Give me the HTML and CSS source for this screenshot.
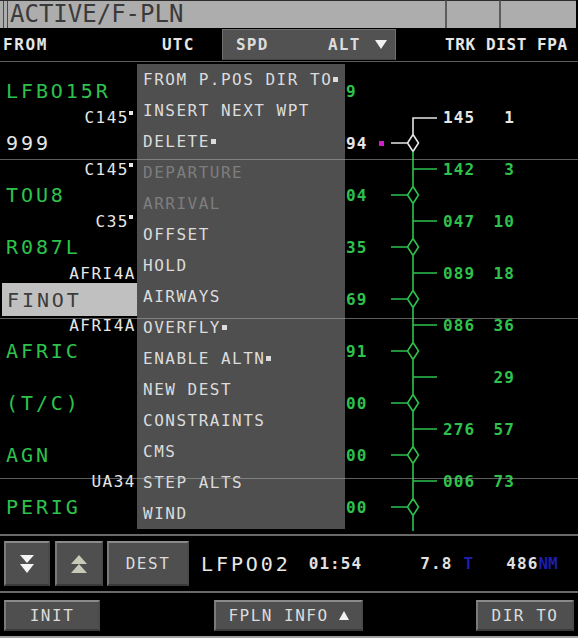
FILE: index.html
```html
<!DOCTYPE html>
<html>
<head>
<meta charset="utf-8">
<link rel="stylesheet" href="styles.css">
</head>
<body>
<div class="screen">
  <div class="title">
    <div class="title-main"><div class="edge"></div><span class="title-text">ACTIVE/F-PLN</span></div>
    <div class="title-cell c1"></div>
    <div class="title-cell c2"></div>
  </div>
  <div class="header">
    <span class="h-from">FROM</span>
    <span class="h-utc">UTC</span>
    <div class="h-box"><span class="h-spd">SPD</span><span class="h-alt">ALT</span><span class="h-tri"></span></div>
    <span class="h-right">TRK DIST FPA</span>
  </div>
  <div class="sep-top"></div>
  <div class="list">
    <div class="gap-top"></div>

    <div class="row">
      <div class="name green">LFBO15R</div>
      <div class="val green">9</div>
      <div class="mark"></div>
      <div class="trk"></div>
      <div class="data"></div>
    </div>

    <div class="row">
      <div class="lbl">C145<i class="deg"></i></div>
      <div class="val"></div>
      <div class="mark"></div>
      <svg class="trk" width="47" height="26" viewBox="0 0 47 26"><path class="w" d="M23 26V14H47"/></svg>
      <div class="data white"><span class="t">145</span><span class="d">1</span></div>
    </div>

    <div class="row">
      <div class="name white">999</div>
      <div class="val white">94</div>
      <div class="mark"><i class="mg"></i></div>
      <svg class="trk" width="47" height="26" viewBox="0 0 47 26"><path class="w" d="M23 0V4.5M1 13H17.5M23 4.5L28.5 13L23 21.5L17.5 13Z"/><path class="g" d="M23 21.5V26"/></svg>
      <div class="data"></div>
    </div>

    <div class="row">
      <div class="lbl">C145<i class="deg"></i></div>
      <div class="val"></div>
      <div class="mark"></div>
      <svg class="trk" width="47" height="26" viewBox="0 0 47 26"><path class="g" d="M23 0V26M23 13H47"/></svg>
      <div class="data green"><span class="t">142</span><span class="d">3</span></div>
    </div>

    <div class="row">
      <div class="name green">TOU8</div>
      <div class="val green">04</div>
      <div class="mark"></div>
      <svg class="trk" width="47" height="26" viewBox="0 0 47 26"><path class="g" d="M23 0V4.5M23 21.5V26M1 13H17.5M23 4.5L28.5 13L23 21.5L17.5 13Z"/></svg>
      <div class="data"></div>
    </div>

    <div class="row">
      <div class="lbl">C35<i class="deg"></i></div>
      <div class="val"></div>
      <div class="mark"></div>
      <svg class="trk" width="47" height="26" viewBox="0 0 47 26"><path class="g" d="M23 0V26M23 13H47"/></svg>
      <div class="data green"><span class="t">047</span><span class="d">10</span></div>
    </div>

    <div class="row">
      <div class="name green">R087L</div>
      <div class="val green">35</div>
      <div class="mark"></div>
      <svg class="trk" width="47" height="26" viewBox="0 0 47 26"><path class="g" d="M23 0V4.5M23 21.5V26M1 13H17.5M23 4.5L28.5 13L23 21.5L17.5 13Z"/></svg>
      <div class="data"></div>
    </div>

    <div class="row">
      <div class="lbl">AFRI4A</div>
      <div class="val"></div>
      <div class="mark"></div>
      <svg class="trk" width="47" height="26" viewBox="0 0 47 26"><path class="g" d="M23 0V26M23 13H47"/></svg>
      <div class="data green"><span class="t">089</span><span class="d">18</span></div>
    </div>

    <div class="row">
      <div class="name sel">FINOT</div>
      <div class="val green">69</div>
      <div class="mark"></div>
      <svg class="trk" width="47" height="26" viewBox="0 0 47 26"><path class="g" d="M23 0V4.5M23 21.5V26M1 13H17.5M23 4.5L28.5 13L23 21.5L17.5 13Z"/></svg>
      <div class="data"></div>
    </div>

    <div class="row">
      <div class="lbl">AFRI4A</div>
      <div class="val"></div>
      <div class="mark"></div>
      <svg class="trk" width="47" height="26" viewBox="0 0 47 26"><path class="g" d="M23 0V26M23 13H47"/></svg>
      <div class="data green"><span class="t">086</span><span class="d">36</span></div>
    </div>

    <div class="row">
      <div class="name green">AFRIC</div>
      <div class="val green">91</div>
      <div class="mark"></div>
      <svg class="trk" width="47" height="26" viewBox="0 0 47 26"><path class="g" d="M23 0V4.5M23 21.5V26M1 13H17.5M23 4.5L28.5 13L23 21.5L17.5 13Z"/></svg>
      <div class="data"></div>
    </div>

    <div class="row">
      <div class="lbl"></div>
      <div class="val"></div>
      <div class="mark"></div>
      <svg class="trk" width="47" height="26" viewBox="0 0 47 26"><path class="g" d="M23 0V26M23 13H47"/></svg>
      <div class="data green"><span class="t"></span><span class="d">29</span></div>
    </div>

    <div class="row">
      <div class="name green">(T/C)</div>
      <div class="val green">00</div>
      <div class="mark"></div>
      <svg class="trk" width="47" height="26" viewBox="0 0 47 26"><path class="g" d="M23 0V4.5M23 21.5V26M1 13H17.5M23 4.5L28.5 13L23 21.5L17.5 13Z"/></svg>
      <div class="data"></div>
    </div>

    <div class="row">
      <div class="lbl"></div>
      <div class="val"></div>
      <div class="mark"></div>
      <svg class="trk" width="47" height="26" viewBox="0 0 47 26"><path class="g" d="M23 0V26M23 13H47"/></svg>
      <div class="data green"><span class="t">276</span><span class="d">57</span></div>
    </div>

    <div class="row">
      <div class="name green">AGN</div>
      <div class="val green">00</div>
      <div class="mark"></div>
      <svg class="trk" width="47" height="26" viewBox="0 0 47 26"><path class="g" d="M23 0V4.5M23 21.5V26M1 13H17.5M23 4.5L28.5 13L23 21.5L17.5 13Z"/></svg>
      <div class="data"></div>
    </div>

    <div class="row">
      <div class="lbl">UA34</div>
      <div class="val"></div>
      <div class="mark"></div>
      <svg class="trk" width="47" height="26" viewBox="0 0 47 26"><path class="g" d="M23 0V26M23 13H47"/></svg>
      <div class="data green"><span class="t">006</span><span class="d">73</span></div>
    </div>

    <div class="row">
      <div class="name green">PERIG</div>
      <div class="val green">00</div>
      <div class="mark"></div>
      <svg class="trk" width="47" height="26" viewBox="0 0 47 26"><path class="g" d="M23 0V4.5M23 21.5V26M1 13H17.5M23 4.5L28.5 13L23 21.5L17.5 13Z"/></svg>
      <div class="data"></div>
    </div>

    <div class="tail">
      <div></div><div></div><div></div>
      <svg class="trk" width="47" height="14" viewBox="0 0 47 14"><path class="g" d="M23 0V11"/></svg>
    </div>

    <div class="menu">
      <div class="item">FROM P.POS DIR TO<i class="sq"></i></div>
      <div class="item">INSERT NEXT WPT</div>
      <div class="item">DELETE<i class="sq"></i></div>
      <div class="item off">DEPARTURE</div>
      <div class="item off">ARRIVAL</div>
      <div class="item">OFFSET</div>
      <div class="item">HOLD</div>
      <div class="item">AIRWAYS</div>
      <div class="item">OVERFLY<i class="sq"></i></div>
      <div class="item">ENABLE ALTN<i class="sq"></i></div>
      <div class="item">NEW DEST</div>
      <div class="item">CONSTRAINTS</div>
      <div class="item">CMS</div>
      <div class="item">STEP ALTS</div>
      <div class="item">WIND</div>
    </div>

    <div class="scan s1"></div>
    <div class="scan s2"></div>
    <div class="scan s3"></div>
  </div>
  <div class="sep-mid"></div>
  <div class="foot1">
    <div class="btn b-down"><svg width="16" height="20" viewBox="0 0 16 20"><path d="M1 1H15L8 9Z M1 10H15L8 19Z" fill="#f4f4f4"/></svg></div>
    <div class="btn b-up"><svg width="18" height="20" viewBox="0 0 18 20"><path d="M9 1L17 10H1Z M9 10L17 19H1Z" fill="#c9c9b9"/></svg></div>
    <div class="btn b-dest">DEST</div>
    <span class="dest-name">LFPO02</span>
    <span class="dest-time">01:54</span>
    <span class="dest-efob">7.8</span>
    <span class="unit u-t">T</span>
    <span class="dest-dist">486</span>
    <span class="unit">NM</span>
  </div>
  <div class="sep-mid"></div>
  <div class="foot2">
    <div class="btn b-init">INIT</div>
    <div class="btn b-info">FPLN INFO<span class="up-tri"></span></div>
    <div class="btn b-dir">DIR TO</div>
  </div>
  <div class="sep-bottom"></div>
</div>
</body>
</html>
```

FILE: styles.css
```css
* { box-sizing: border-box; margin: 0; padding: 0; }

html, body { background: #000; }

body {
  width: 578px;
  height: 638px;
  overflow: hidden;
  font-family: "DejaVu Sans Mono", "Liberation Mono", monospace;
  font-size: 16px;
  color: #e0e0e0;
}

.screen {
  width: 578px;
  height: 638px;
  display: flex;
  flex-direction: column;
}

/* ---------- title bar ---------- */
.title {
  height: 28px;
  display: flex;
}

.title-main {
  width: 445px;
  display: flex;
  align-items: center;
  background: #adadad;
  border-top: 1px solid #2c2c2c;
}

.edge {
  width: 8px;
  height: 100%;
  background: linear-gradient(to right, #adadad 0 3px, #4a4a4a 3px 4px, #adadad 4px 7px, #4a4a4a 7px 8px);
}

.title-text {
  padding-left: 2px;
  font-size: 24px;
  color: #3a3a3a;
  line-height: 27px;
}

.title-cell {
  background: #adadad;
  border-top: 1px solid #2c2c2c;
  border-left: 2px solid #5c5c5c;
}
.c1 { width: 54px; }
.c2 { width: 77px; }

/* ---------- header ---------- */
.header {
  height: 33px;
  display: flex;
  align-items: center;
  font-weight: bold;
  font-size: 16px;
  color: #e6e6e6;
  letter-spacing: 1.2px;
}

.h-from { width: 162px; padding-left: 3px; letter-spacing: 1.6px; }
.h-utc { width: 60px; }

.h-box {
  width: 174px;
  height: 31px;
  display: flex;
  align-items: center;
  background: #525252;
  border: 1px solid #707070;
  border-bottom-color: #444;
  padding-left: 13px;
  color: #dcdcdc;
}
.h-spd { width: 92px; }
.h-alt { width: 36px; }
.h-tri {
  margin-left: 11px;
  width: 0;
  height: 0;
  border-left: 6px solid transparent;
  border-right: 6px solid transparent;
  border-top: 9px solid #f2f2f2;
}

.h-right { margin-left: 49px; letter-spacing: 0.6px; }

.sep-top { height: 1px; background: #5c5c5c; }

/* ---------- flight plan list ---------- */
.list {
  height: 472px;
  position: relative;
  display: flex;
  flex-direction: column;
}

.gap-top { height: 16px; flex: none; }

.row, .tail {
  flex: none;
  display: grid;
  grid-template-columns: 137px 235px 18px 47px 1fr;
  align-items: center;
}
.row { height: 26px; }
.tail { height: 14px; }

.name {
  padding-left: 6px;
  font-size: 20px;
  letter-spacing: 2.9px;
  white-space: nowrap;
}

.name.sel {
  background: #c0c0c0;
  color: #3c3c3c;
  height: 33px;
  margin: -3px 0 -4px 2px;
  padding-left: 5px;
  display: flex;
  align-items: center;
}

.lbl {
  text-align: right;
  padding-right: 1px;
  font-size: 16px;
  letter-spacing: 1.5px;
  white-space: nowrap;
  color: #e8e8e8;
}

.deg {
  display: inline-block;
  width: 4px;
  height: 4px;
  background: #e8e8e8;
  vertical-align: 8px;
  margin-right: 3px;
}

.val {
  padding-left: 209px;
  font-size: 16px;
  font-weight: bold;
  letter-spacing: 1.1px;
  white-space: nowrap;
  overflow: hidden;
}

.green { color: #2ec24c; }
.white { color: #e6e6e6; }

.mark { height: 26px; display: flex; align-items: center; }
.mg {
  display: block;
  width: 5px;
  height: 5px;
  margin-left: 7px;
  background: #d41ccb;
}

.trk { display: block; }
.trk path { fill: none; stroke-width: 1.6; }
.trk .g { stroke: #2ec24c; }
.trk .w { stroke: #e6e6e6; }

.data {
  display: flex;
  padding-left: 6px;
  font-size: 16px;
  font-weight: bold;
  letter-spacing: 1.1px;
  white-space: nowrap;
}
.data .t { width: 40px; }
.data .d { width: 32px; text-align: right; }

/* ---------- popup menu ---------- */
.menu {
  position: absolute;
  left: 137px;
  top: 2px;
  width: 208px;
  height: 465px;
  background: #4f4f4f;
  z-index: 2;
  display: flex;
  flex-direction: column;
}

.item {
  height: 31px;
  display: flex;
  align-items: center;
  padding-left: 6px;
  font-size: 16px;
  letter-spacing: 1.5px;
  color: #dcdcdc;
  white-space: nowrap;
}
.item.off { color: #7e7e7e; }

.sq {
  display: inline-block;
  width: 5px;
  height: 5px;
  background: #dcdcdc;
  margin-left: 1px;
}

.scan {
  position: absolute;
  left: 0;
  width: 578px;
  height: 1px;
  background: rgba(170, 170, 170, 0.55);
  z-index: 3;
}
.s1 { top: 97px; }
.s2 { top: 256px; }
.s3 { top: 416px; }

/* ---------- footer ---------- */
.sep-mid { height: 2px; background: #6a6a6a; }
.sep-bottom { height: 2px; background: #a2a2a2; }

.btn {
  display: flex;
  align-items: center;
  justify-content: center;
  background: #4f4f4f;
  border: 2px solid;
  border-color: #8a8a8a #4a4a4a #3a3a3a #7a7a7a;
  color: #dcdcdc;
  font-size: 16px;
  letter-spacing: 1.5px;
  white-space: nowrap;
}

.foot1 {
  height: 55px;
  display: flex;
  align-items: center;
  white-space: nowrap;
}
.foot1 .btn { height: 45px; }
.b-down { margin-left: 4px; width: 46px; }
.b-up { margin-left: 5px; width: 48px; }
.b-dest { margin-left: 4px; width: 82px; }

.dest-name {
  margin-left: 12px;
  font-size: 20px;
  letter-spacing: 2.9px;
  color: #e8e8e8;
}
.dest-time {
  margin-left: 18px;
  font-size: 16px;
  font-weight: bold;
  letter-spacing: 1.1px;
}
.dest-efob {
  margin-left: 58px;
  font-size: 16px;
  font-weight: bold;
  letter-spacing: 1.1px;
}
.dest-dist {
  margin-left: 33px;
  font-size: 16px;
  font-weight: bold;
  letter-spacing: 1.1px;
}
.unit {
  font-size: 16px;
  font-weight: bold;
  color: #1e1eaa;
}
.u-t { margin-left: 11px; }

.foot2 {
  height: 43px;
  display: flex;
  align-items: center;
  padding-top: 1px;
}
.foot2 .btn { height: 31px; }
.b-init { margin-left: 4px; width: 96px; }
.b-info { margin-left: 114px; width: 149px; }
.b-dir { margin-left: 113px; width: 98px; }

.up-tri {
  margin-left: 10px;
  width: 0;
  height: 0;
  border-left: 5px solid transparent;
  border-right: 5px solid transparent;
  border-bottom: 9px solid #f2f2f2;
}
```
